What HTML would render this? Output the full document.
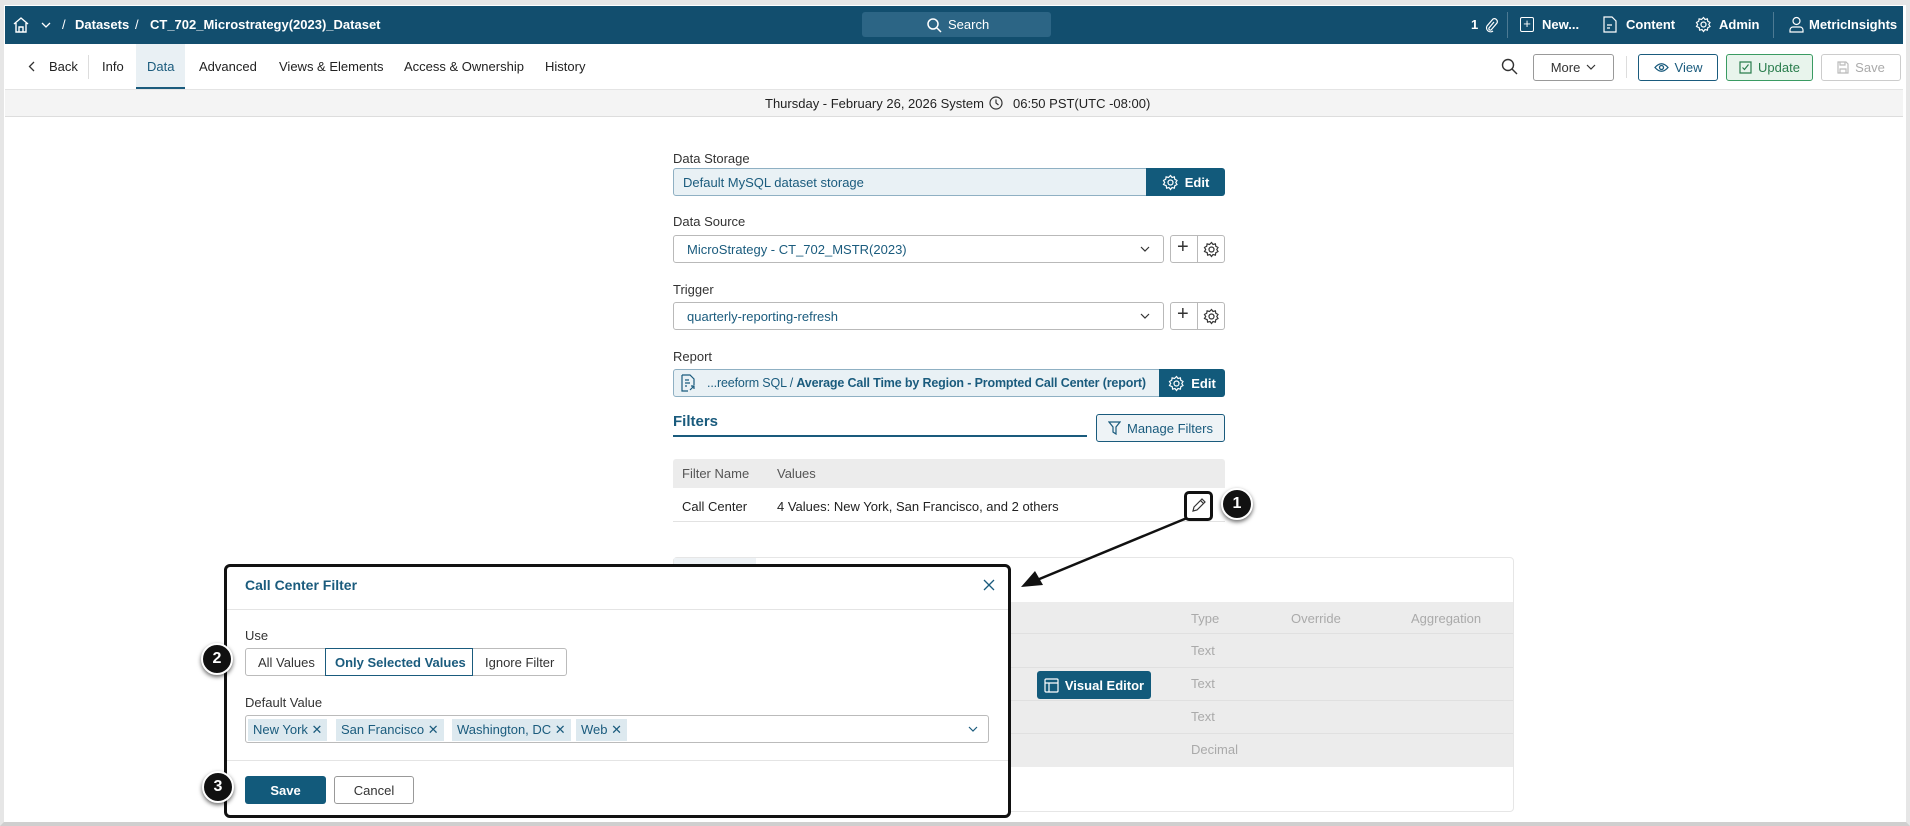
<!DOCTYPE html>
<html><head><meta charset="utf-8"><style>
*{box-sizing:border-box;margin:0;padding:0}
body{width:1910px;height:826px;position:relative;overflow:hidden;background:#fff;font-family:"Liberation Sans",sans-serif;font-size:13px;color:#222}
.a{position:absolute;white-space:nowrap}
.top{left:5px;top:6px;width:1898px;height:38px;background:#124e6e;color:#fff}
.lbl{color:#333;font-size:13px}
.inp{position:absolute;border:1px solid #b9b9b9;border-radius:3px;background:#fff;color:#1a5b7d;white-space:nowrap;overflow:hidden}
.btn{position:absolute;border-radius:3px;display:flex;align-items:center;justify-content:center;gap:6px}
.dark{background:#125a7b;color:#fff;font-weight:bold}
.circ{position:absolute;width:32px;height:32px;border-radius:50%;background:#111;color:#fff;font-weight:bold;font-size:16px;display:flex;align-items:center;justify-content:center;border:2px solid #fff;box-shadow:0 2px 4px rgba(0,0,0,.6)}
.tag{position:absolute;top:3px;height:22px;background:#dde9ef;color:#1a5b7d;padding:0 5px;line-height:22px;font-size:13px}
.gr{color:#aaa}
</style></head><body>
<div style="position:absolute;left:0;top:0;width:1910px;height:826px;border:4px solid #e6e6e6;border-bottom:4px solid #cfcfcf;border-top-width:5px"></div>

<div class="a top">
 <svg class="a" style="left:7px;top:10px" width="18" height="18" viewBox="0 0 18 18" fill="none" stroke="#fff" stroke-width="1.4"><path d="M2 8L9 2l7 6M4 7v9h10V7M7 16v-5h4v5"/></svg>
 <svg class="a" style="left:36px;top:15px" width="10" height="8" viewBox="0 0 10 8" fill="none" stroke="#fff" stroke-width="1.3"><path d="M1 2l4 4 4-4"/></svg>
 <span class="a" style="left:57px;top:11px">/</span>
 <span class="a" style="left:70px;top:11px;font-weight:bold">Datasets</span>
 <span class="a" style="left:130px;top:11px">/</span>
 <span class="a" style="left:145px;top:11px;font-weight:bold">CT_702_Microstrategy(2023)_Dataset</span>
 <div class="a" style="left:857px;top:6px;width:189px;height:25px;background:#2c6585;border-radius:3px"></div>
 <svg class="a" style="left:921px;top:11px" width="16" height="16" viewBox="0 0 16 16" fill="none" stroke="#fff" stroke-width="1.5"><circle cx="7" cy="7" r="5"/><path d="M11 11l4 4"/></svg>
 <span class="a" style="left:943px;top:11px">Search</span>
 <span class="a" style="left:1466px;top:11px;font-weight:bold">1</span>
 <svg class="a" style="left:1479px;top:11px" width="14" height="16" viewBox="0 0 14 16" fill="none" stroke="#fff" stroke-width="1.2"><path d="M10 5l-5 6a1.5 1.5 0 002 2l6-7a3 3 0 00-4-4L3 9a4 4 0 006 5"/></svg>
 <div class="a" style="left:1502px;top:6px;width:1px;height:26px;background:#4d7a93"></div>
 <div class="a" style="left:1515px;top:11px;width:14px;height:15px;border:1.3px solid #fff;border-radius:2px;text-align:center;line-height:12px;font-size:13px">+</div>
 <span class="a" style="left:1537px;top:11px;font-weight:bold">New...</span>
 <svg class="a" style="left:1598px;top:10px" width="14" height="17" viewBox="0 0 14 17" fill="none" stroke="#fff" stroke-width="1.2"><path d="M1 1h8l4 4v11H1zM4 9h5M4 12h3"/></svg>
 <span class="a" style="left:1621px;top:11px;font-weight:bold">Content</span>
 <svg class="a" style="left:1690px;top:10px" width="17" height="17" viewBox="0 0 17 17" fill="none" stroke="#fff" stroke-width="1.2"><circle cx="8.5" cy="8.5" r="2.5"/><path d="M8.5 1.5l1.5 2 2.4-.6.4 2.4 2.2 1.2-1.2 2 1.2 2-2.2 1.2-.4 2.4-2.4-.6-1.5 2-1.5-2-2.4.6-.4-2.4L1.5 10.5l1.2-2-1.2-2 2.2-1.2.4-2.4 2.4.6z"/></svg>
 <span class="a" style="left:1714px;top:11px;font-weight:bold">Admin</span>
 <div class="a" style="left:1768px;top:6px;width:1px;height:26px;background:#4d7a93"></div>
 <svg class="a" style="left:1784px;top:10px" width="15" height="17" viewBox="0 0 15 17" fill="none" stroke="#fff" stroke-width="1.2"><circle cx="7.5" cy="5" r="3.5"/><path d="M1 16v-2a3 3 0 013-3h7a3 3 0 013 3v2z"/></svg>
 <span class="a" style="left:1804px;top:11px;font-weight:bold">MetricInsights</span>
</div>

<!-- tab bar -->
<div class="a" style="left:136px;top:44px;width:49px;height:45px;background:#e9f0f4;border-bottom:2px solid #1a5b7d"></div>
<svg class="a" style="left:28px;top:61px" width="7" height="11" viewBox="0 0 7 11" fill="none" stroke="#333" stroke-width="1.3"><path d="M6 1L1.5 5.5 6 10"/></svg>
<span class="a" style="left:49px;top:59px">Back</span>
<div class="a" style="left:88px;top:55px;width:1px;height:24px;background:#ddd"></div>
<span class="a" style="left:102px;top:59px">Info</span>
<span class="a" style="left:147px;top:59px;color:#1a5b7d">Data</span>
<span class="a" style="left:199px;top:59px">Advanced</span>
<span class="a" style="left:279px;top:59px">Views &amp; Elements</span>
<span class="a" style="left:404px;top:59px">Access &amp; Ownership</span>
<span class="a" style="left:545px;top:59px">History</span>
<svg class="a" style="left:1501px;top:58px" width="17" height="17" viewBox="0 0 17 17" fill="none" stroke="#333" stroke-width="1.4"><circle cx="7" cy="7" r="5.5"/><path d="M11 11l5 5"/></svg>
<div class="btn" style="left:1533px;top:54px;width:81px;height:27px;border:1px solid #999;color:#333">More <svg width="10" height="7" viewBox="0 0 10 7" fill="none" stroke="#333" stroke-width="1.2"><path d="M1 1l4 4 4-4"/></svg></div>
<div class="a" style="left:1626px;top:56px;width:1px;height:22px;background:#ddd"></div>
<div class="btn" style="left:1638px;top:54px;width:80px;height:27px;border:1px solid #1a5b7d;color:#1a5b7d"><svg width="15" height="11" viewBox="0 0 15 11" fill="none" stroke="#1a5b7d" stroke-width="1.3"><path d="M1 5.5Q7.5-2 14 5.5 7.5 13 1 5.5z"/><circle cx="7.5" cy="5.5" r="2"/></svg>View</div>
<div class="btn" style="left:1726px;top:54px;width:87px;height:27px;border:1px solid #3a9b62;background:#e8f4ec;color:#2a7d4d"><svg width="13" height="13" viewBox="0 0 13 13" fill="none" stroke="#2a7d4d" stroke-width="1.2"><path d="M1 1h11v11H1zM3.5 6.5l2 2 4-5"/></svg>Update</div>
<div class="btn" style="left:1821px;top:54px;width:80px;height:27px;border:1px solid #ccc;color:#aaa"><svg width="12" height="13" viewBox="0 0 12 13" fill="none" stroke="#bbb" stroke-width="1.2"><path d="M1 1h8l2 2v9H1zM3 1v3h5V1M3 12V8h6v4"/></svg>Save</div>

<!-- date strip -->
<div class="a" style="left:5px;top:89px;width:1898px;height:28px;background:#f4f4f4;border-top:1px solid #e4e4e4;border-bottom:1px solid #ddd"></div>
<span class="a" style="left:765px;top:96px">Thursday - February 26, 2026 System</span>
<svg class="a" style="left:989px;top:96px" width="14" height="14" viewBox="0 0 14 14" fill="none" stroke="#333" stroke-width="1.2"><circle cx="7" cy="7" r="6"/><path d="M7 3.5V7l2.5 2"/></svg>
<span class="a" style="left:1013px;top:96px">06:50 PST(UTC -08:00)</span>

<!-- form -->
<span class="a lbl" style="left:673px;top:151px">Data Storage</span>
<div class="inp" style="left:673px;top:168px;width:476px;height:28px;background:#e9f1f5;border-color:#8fb0c3;border-radius:3px 0 0 3px;padding:6px 9px">Default MySQL dataset storage</div>
<div class="btn dark" style="left:1146px;top:168px;width:79px;height:28px;border-radius:0 3px 3px 0"><svg width="17" height="17" viewBox="0 0 17 17" fill="none" stroke="#fff" stroke-width="1.2"><circle cx="8.5" cy="8.5" r="2.5"/><path d="M8.5 1.5l1.5 2 2.4-.6.4 2.4 2.2 1.2-1.2 2 1.2 2-2.2 1.2-.4 2.4-2.4-.6-1.5 2-1.5-2-2.4.6-.4-2.4L1.5 10.5l1.2-2-1.2-2 2.2-1.2.4-2.4 2.4.6z"/></svg>Edit</div>

<span class="a lbl" style="left:673px;top:214px">Data Source</span>
<div class="inp" style="left:673px;top:235px;width:491px;height:28px;padding:6px 13px">MicroStrategy - CT_702_MSTR(2023)</div>
<svg class="a" style="left:1140px;top:246px" width="10" height="7" viewBox="0 0 10 7" fill="none" stroke="#333" stroke-width="1.2"><path d="M1 1l4 4 4-4"/></svg>
<div class="inp" style="left:1170px;top:235px;width:55px;height:28px"></div>
<div class="a" style="left:1197px;top:235px;width:1px;height:28px;background:#b9b9b9"></div>
<span class="a" style="left:1177px;top:236px;font-size:20px;color:#333">+</span>
<svg class="a" style="left:1203px;top:241px" width="17" height="17" viewBox="0 0 17 17" fill="none" stroke="#333" stroke-width="1.2"><circle cx="8.5" cy="8.5" r="2.5"/><path d="M8.5 1.5l1.5 2 2.4-.6.4 2.4 2.2 1.2-1.2 2 1.2 2-2.2 1.2-.4 2.4-2.4-.6-1.5 2-1.5-2-2.4.6-.4-2.4L1.5 10.5l1.2-2-1.2-2 2.2-1.2.4-2.4 2.4.6z"/></svg>

<span class="a lbl" style="left:673px;top:282px">Trigger</span>
<div class="inp" style="left:673px;top:302px;width:491px;height:28px;padding:6px 13px">quarterly-reporting-refresh</div>
<svg class="a" style="left:1140px;top:313px" width="10" height="7" viewBox="0 0 10 7" fill="none" stroke="#333" stroke-width="1.2"><path d="M1 1l4 4 4-4"/></svg>
<div class="inp" style="left:1170px;top:302px;width:55px;height:28px"></div>
<div class="a" style="left:1197px;top:302px;width:1px;height:28px;background:#b9b9b9"></div>
<span class="a" style="left:1177px;top:303px;font-size:20px;color:#333">+</span>
<svg class="a" style="left:1203px;top:308px" width="17" height="17" viewBox="0 0 17 17" fill="none" stroke="#333" stroke-width="1.2"><circle cx="8.5" cy="8.5" r="2.5"/><path d="M8.5 1.5l1.5 2 2.4-.6.4 2.4 2.2 1.2-1.2 2 1.2 2-2.2 1.2-.4 2.4-2.4-.6-1.5 2-1.5-2-2.4.6-.4-2.4L1.5 10.5l1.2-2-1.2-2 2.2-1.2.4-2.4 2.4.6z"/></svg>

<span class="a lbl" style="left:673px;top:349px">Report</span>
<div class="inp" style="left:673px;top:369px;width:490px;height:28px;background:#e9f1f5;border-color:#8fb0c3;padding:6px 0 0 33px;font-size:12.5px;letter-spacing:-0.15px">...reeform SQL / <b>Average Call Time by Region - Prompted Call Center (report)</b></div>
<svg class="a" style="left:681px;top:374px" width="14" height="18" viewBox="0 0 14 18" fill="none" stroke="#1a5b7d" stroke-width="1.2"><path d="M1 1h8l4 4v6M1 1v16h6M4 6h4M4 9h5M4 12h2M9 16l4-4M10 12h3v3"/></svg>
<div class="btn dark" style="left:1159px;top:369px;width:66px;height:28px;border-radius:0 3px 3px 0"><svg width="17" height="17" viewBox="0 0 17 17" fill="none" stroke="#fff" stroke-width="1.2"><circle cx="8.5" cy="8.5" r="2.5"/><path d="M8.5 1.5l1.5 2 2.4-.6.4 2.4 2.2 1.2-1.2 2 1.2 2-2.2 1.2-.4 2.4-2.4-.6-1.5 2-1.5-2-2.4.6-.4-2.4L1.5 10.5l1.2-2-1.2-2 2.2-1.2.4-2.4 2.4.6z"/></svg>Edit</div>

<span class="a" style="left:673px;top:413px;font-size:15px;font-weight:bold;color:#1a5b7d">Filters</span>
<div class="a" style="left:673px;top:435px;width:414px;height:2px;background:#1a5b7d"></div>
<div class="btn" style="left:1096px;top:414px;width:129px;height:28px;border:1px solid #1a5b7d;background:#eef3f6;color:#1a5b7d"><svg width="13" height="14" viewBox="0 0 13 14" fill="none" stroke="#1a5b7d" stroke-width="1.2"><path d="M1 1h11L8 6v7L5 11V6z"/></svg>Manage Filters</div>

<div class="a" style="left:673px;top:459px;width:552px;height:29px;background:#ececec;border-radius:3px 3px 0 0"></div>
<span class="a" style="left:682px;top:466px;color:#555">Filter Name</span>
<span class="a" style="left:777px;top:466px;color:#555">Values</span>
<span class="a" style="left:682px;top:499px">Call Center</span>
<span class="a" style="left:777px;top:499px">4 Values: New York, San Francisco, and 2 others</span>
<div class="a" style="left:673px;top:521px;width:552px;height:1px;background:#e2e2e2"></div>
<div class="a" style="left:1184px;top:491px;width:29px;height:30px;border:3px solid #111;border-radius:5px;background:#fff"></div>
<svg class="a" style="left:1191px;top:498px" width="15" height="15" viewBox="0 0 15 15" fill="none" stroke="#333" stroke-width="1.2"><path d="M2 13l1-4 8-8 3 3-8 8zM9.5 2.5l3 3"/></svg>
<div class="circ" style="left:1221px;top:488px">1</div>

<!-- panel behind modal -->
<div class="a" style="left:673px;top:557px;width:841px;height:255px;border:1px solid #e6e6e6;border-radius:4px;background:#fff"></div>
<div class="a" style="left:674px;top:558px;width:82px;height:35px;background:#eef2f5"></div>
<div class="a" style="left:674px;top:602px;width:839px;height:165px;background:#ececec"></div>
<div class="a" style="left:674px;top:633px;width:839px;height:1px;background:#e0e0e0"></div>
<div class="a" style="left:674px;top:667px;width:839px;height:1px;background:#e0e0e0"></div>
<div class="a" style="left:674px;top:700px;width:839px;height:1px;background:#e0e0e0"></div>
<div class="a" style="left:674px;top:733px;width:839px;height:1px;background:#e0e0e0"></div>
<span class="a gr" style="left:1191px;top:611px">Type</span>
<span class="a gr" style="left:1291px;top:611px">Override</span>
<span class="a gr" style="left:1411px;top:611px">Aggregation</span>
<span class="a gr" style="left:1191px;top:643px">Text</span>
<span class="a gr" style="left:1191px;top:676px">Text</span>
<span class="a gr" style="left:1191px;top:709px">Text</span>
<span class="a gr" style="left:1191px;top:742px">Decimal</span>
<div class="btn dark" style="left:1037px;top:671px;width:114px;height:28px;font-weight:bold"><svg width="15" height="15" viewBox="0 0 15 15" fill="none" stroke="#fff" stroke-width="1.2"><rect x="1" y="1" width="13" height="13" rx="1"/><path d="M1 5h13M5 5v9"/></svg>Visual Editor</div>

<!-- modal -->
<div class="a" style="left:224px;top:564px;width:787px;height:254px;border:3px solid #111;border-radius:6px;background:#fff"></div>
<span class="a" style="left:245px;top:577px;font-size:14px;font-weight:bold;color:#1a5b7d">Call Center Filter</span>
<svg class="a" style="left:983px;top:579px" width="12" height="12" viewBox="0 0 12 12" stroke="#1a5b7d" stroke-width="1.3"><path d="M1 1l10 10M11 1L1 11"/></svg>
<div class="a" style="left:227px;top:609px;width:781px;height:1px;background:#e4e4e4"></div>
<span class="a lbl" style="left:245px;top:628px">Use</span>
<div class="inp" style="left:245px;top:648px;width:322px;height:28px;border-color:#bbb"></div>
<span class="a" style="left:258px;top:655px;color:#333">All Values</span>
<div class="a" style="left:325px;top:648px;width:148px;height:28px;border:1px solid #1a5b7d;background:#fff"></div>
<span class="a" style="left:335px;top:655px;color:#1a5b7d;font-weight:bold">Only Selected Values</span>
<span class="a" style="left:485px;top:655px;color:#333">Ignore Filter</span>
<span class="a lbl" style="left:245px;top:695px">Default Value</span>
<div class="inp" style="left:245px;top:715px;width:744px;height:28px;border-color:#bbb">
 <span class="tag" style="left:2px">New York ✕</span>
 <span class="tag" style="left:90px">San Francisco ✕</span>
 <span class="tag" style="left:206px">Washington, DC ✕</span>
 <span class="tag" style="left:330px">Web ✕</span>
</div>
<svg class="a" style="left:968px;top:726px" width="10" height="7" viewBox="0 0 10 7" fill="none" stroke="#1a5b7d" stroke-width="1.2"><path d="M1 1l4 4 4-4"/></svg>
<div class="a" style="left:227px;top:760px;width:781px;height:1px;background:#e4e4e4"></div>
<div class="btn dark" style="left:245px;top:776px;width:81px;height:28px">Save</div>
<div class="btn" style="left:334px;top:776px;width:80px;height:28px;border:1px solid #999;color:#333">Cancel</div>
<div class="circ" style="left:201px;top:643px">2</div>
<div class="circ" style="left:202px;top:771px">3</div>

<svg class="a" style="left:1015px;top:515px" width="180" height="80" viewBox="0 0 180 80"><path d="M172 3L22 65" stroke="#111" stroke-width="2.5"/><path d="M6 72l22-2-8-14z" fill="#111"/></svg>
</body></html>
